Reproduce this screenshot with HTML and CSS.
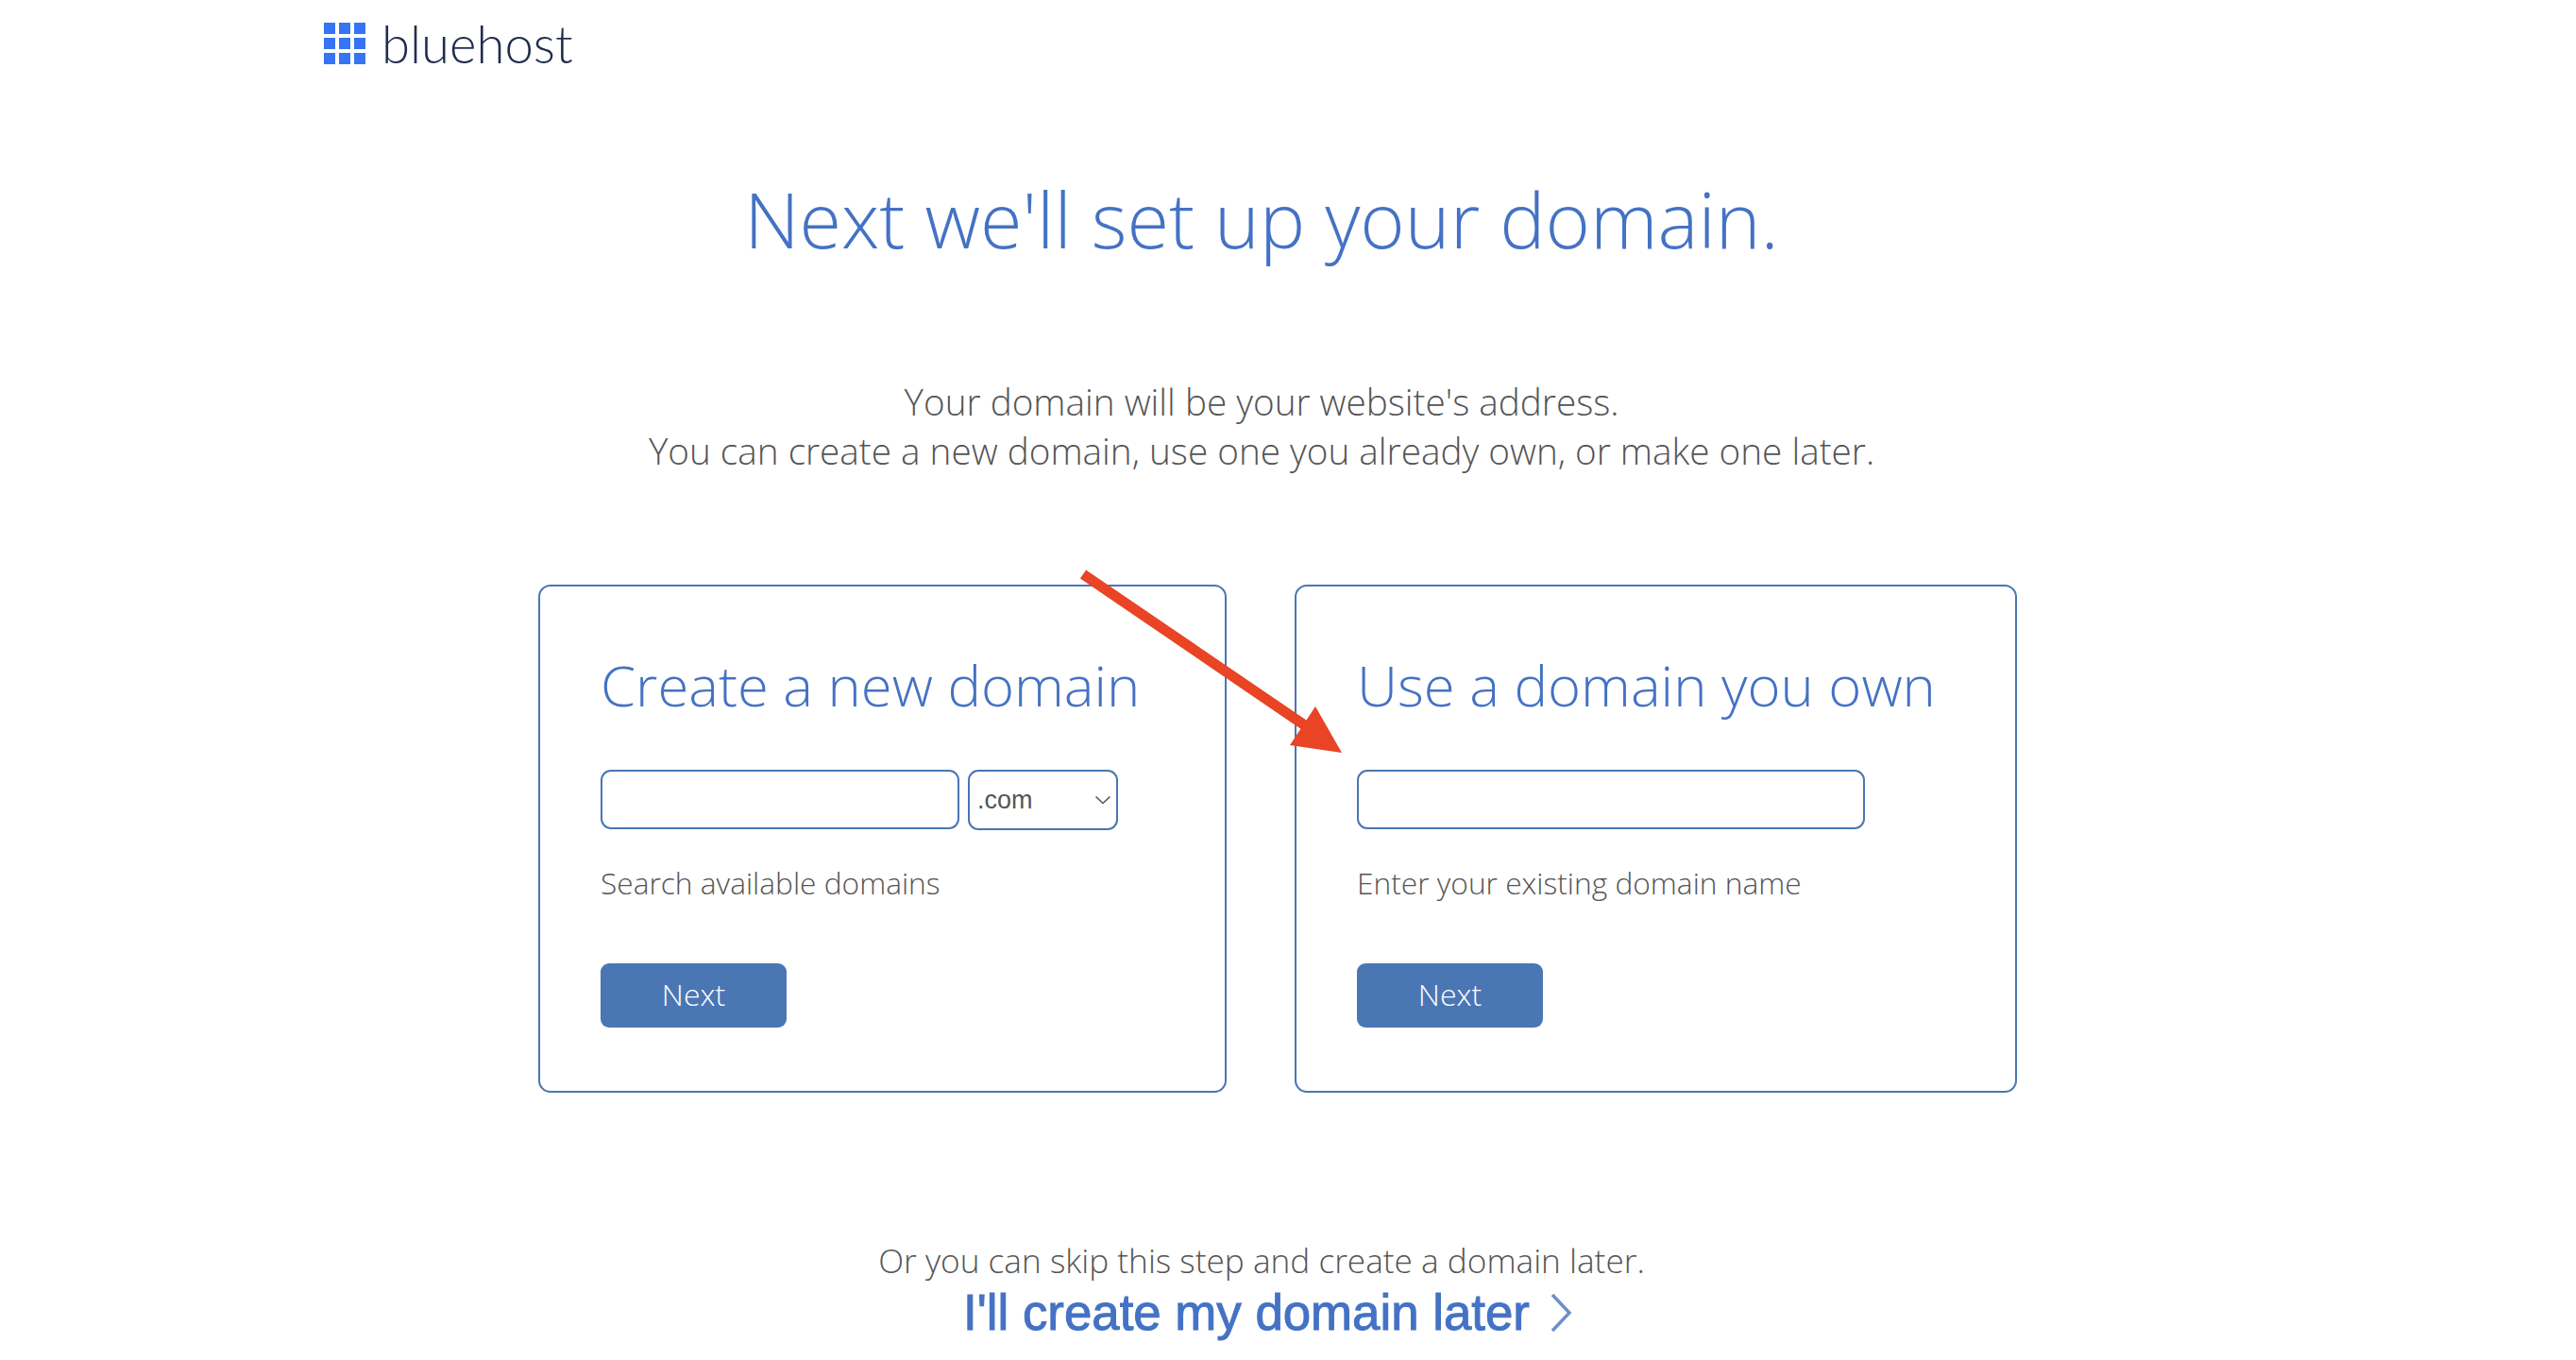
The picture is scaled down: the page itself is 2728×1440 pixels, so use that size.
FILE: index.html
```html
<!DOCTYPE html>
<html lang="en">
<head>
<meta charset="utf-8">
<title>Bluehost - Set up your domain</title>
<link rel="stylesheet" href="styles.css">
</head>
<body>
<div class="page">
  <header class="brand">
    <div class="brand-grid">
      <i></i><i></i><i></i><i></i><i></i><i></i><i></i><i></i><i></i>
    </div>
    <span class="brand-name">bluehost</span>
  </header>
  <main class="main">
    <h1 class="title">Next we'll set up your domain.</h1>
    <p class="intro">Your domain will be your website's address.<br>You can create a new domain, use one you already own, or make one later.</p>
    <div class="cards">
      <section class="card card-new">
        <h2 class="card-title">Create a new domain</h2>
        <div class="fields">
          <input class="field field-new" type="text" aria-label="New domain">
          <div class="select-wrap">
            <select class="select" aria-label="Extension"><option>.com</option></select>
            <svg class="select-chevron" viewBox="0 0 18 10" aria-hidden="true"><path d="M1.5 1.5 9 8.5 16.5 1.5"/></svg>
          </div>
        </div>
        <p class="hint">Search available domains</p>
        <button class="next" type="button">Next</button>
      </section>
      <section class="card card-own">
        <h2 class="card-title">Use a domain you own</h2>
        <div class="fields">
          <input class="field field-own" type="text" aria-label="Existing domain">
        </div>
        <p class="hint">Enter your existing domain name</p>
        <button class="next" type="button">Next</button>
      </section>
    </div>
    <p class="skip">Or you can skip this step and create a domain later.</p>
    <a class="later" href="#">I'll create my domain later<svg class="later-chevron" viewBox="0 0 24 42" aria-hidden="true"><path d="M3 2 21 21 3 40"/></svg></a>
  </main>
  <svg class="arrow" viewBox="0 0 2728 1440" aria-hidden="true">
    <path class="arrow-shaft" d="M1147 608 1392 775"/>
    <path class="arrow-head" d="M1393 748 1421 797 1366 789Z"/>
  </svg>
</div>
</body>
</html>
```
FILE: styles.css
```css
* { box-sizing: border-box; }
html, body { margin: 0; padding: 0; background: #fff; }
.page { position: relative; width: 2728px; height: 1440px; overflow: hidden; font-family: "Open Sans", sans-serif; font-weight: 300; }

.brand { display: flex; align-items: center; gap: 17px; padding: 16px 0 0 343px; height: 76px; }
.brand-grid { display: grid; grid-template-columns: repeat(3, 12px); grid-auto-rows: 12px; gap: 4px; }
.brand-grid i { background: #3575f5; display: block; }
.brand-name { font-family: Lato, sans-serif; font-weight: 300; font-size: 54.5px; line-height: 60px; color: #1f2d4d; }

.main { display: flex; flex-direction: column; width: 2672px; }
.title { margin: 98px 0 0; text-align: center; font-weight: 300; font-size: 81px; line-height: 116px; color: #4472c4; }
.intro { margin: 109px 0 0; text-align: center; font-size: 38.7px; line-height: 52px; color: #555; }

.cards { display: flex; gap: 72px; margin: 116px 0 0 570px; }
.card { height: 538px; border: 2px solid #4a76b4; border-radius: 13px; padding: 63px 64px 0; background: #fff; }
.card-new { width: 729px; }
.card-own { width: 765px; }
.card-title { margin: 0; font-weight: 300; font-size: 59.8px; line-height: 82px; color: #4472c4; white-space: nowrap; }
.fields { display: flex; gap: 9px; margin-top: 49px; height: 64px; }
.field { height: 63px; border: 2px solid #4a76b4; border-radius: 11px; background: #fff; padding: 0 10px; }
.field-new { width: 380px; }
.field-own { width: 538px; }
.select-wrap { position: relative; width: 159px; height: 64px; }
.select { appearance: none; width: 100%; height: 100%; border: 2px solid #4a76b4; border-radius: 11px; background: #fff; padding: 0 8px; font-family: "Liberation Sans", sans-serif; font-size: 27px; color: #555; }
.select-chevron { position: absolute; right: 7px; top: 27px; width: 18px; height: 10px; fill: none; stroke: #555; stroke-width: 1.6; }
.hint { margin: 34px 0 0; font-size: 31.7px; line-height: 44px; color: #555; }
.next { display: block; margin-top: 63px; width: 197px; height: 68px; border: 0; border-radius: 9px; padding: 0 0 3px; background: #4a76b4; color: #fff; font-family: "Open Sans", sans-serif; font-weight: 300; font-size: 32px; }

.skip { margin: 152px 0 0; text-align: center; font-size: 35.2px; line-height: 50px; color: #555; }
.later { display: flex; justify-content: center; align-items: center; gap: 21px; margin: 2px 0 0 13px; font-family: "Liberation Sans", sans-serif; font-weight: 400; -webkit-text-stroke: 1px #4472c4; font-size: 52.8px; line-height: 58px; color: #4472c4; text-decoration: none; }
.later-chevron { width: 24px; height: 42px; fill: none; stroke: #6d8fc9; stroke-width: 3.5; }

.arrow { position: absolute; left: 0; top: 0; width: 2728px; height: 1440px; pointer-events: none; }
.arrow-shaft { stroke: #e94425; stroke-width: 11; fill: none; }
.arrow-head { fill: #e94425; }
```
